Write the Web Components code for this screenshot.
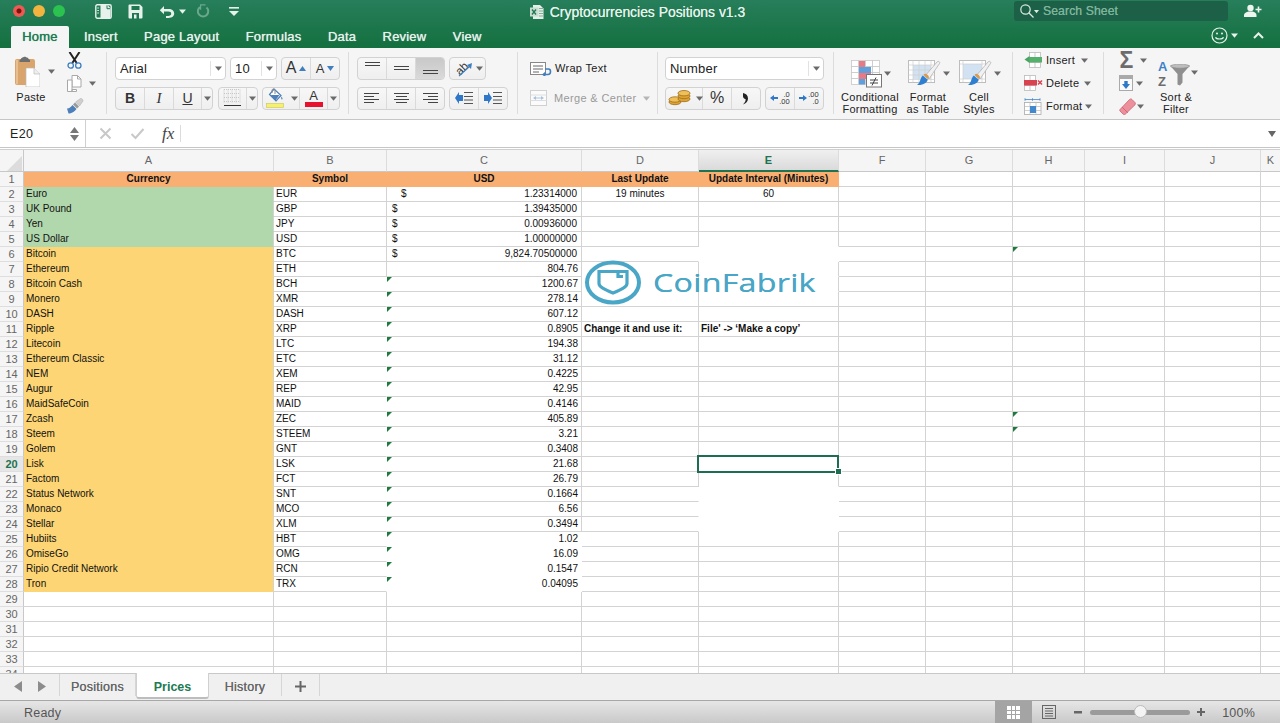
<!DOCTYPE html>
<html><head><meta charset="utf-8"><title>Cryptocurrencies Positions v1.3</title>
<style>
html,body{margin:0;padding:0;width:1280px;height:723px;overflow:hidden;background:#fff;font-family:"Liberation Sans",Arial,sans-serif}
body{display:flex;flex-direction:column}
</style></head><body>
<xl-titlebar></xl-titlebar>
<xl-ribbon></xl-ribbon>
<xl-formula></xl-formula>
<xl-sheet></xl-sheet>
<xl-sheettabs></xl-sheettabs>
<xl-status></xl-status>
<script>
const S=(w,h,b)=>`<svg xmlns="http://www.w3.org/2000/svg" width="${w}" height="${h}" viewBox="0 0 ${w} ${h}" style="display:block;flex:none">${b}</svg>`;
const I={
sidebar:S(17,15,'<rect x=".8" y=".8" width="15.4" height="13.4" rx="1.5" fill="none" stroke="#e8f2ed" stroke-width="1.4"/><path d="M5.5 1h7l3 3.2V14h-10z" fill="#e8f2ed"/><path d="M12 1.4v3.3h3.2" fill="none" stroke="#1f7750"/><path d="M2.3 4h1.6M2.3 6.5h1.6M2.3 9h1.6" stroke="#e8f2ed"/>'),
save:S(15,15,'<path d="M1.5.5h10.5l2.5 2.5v10.5a1 1 0 0 1-1 1h-12a1 1 0 0 1-1-1v-12a1 1 0 0 1 1-1z" fill="#e8f2ed"/><rect x="3.5" y="2" width="8" height="4" fill="#1f7750"/><rect x="4" y="9" width="7" height="6" fill="#1f7750"/><rect x="6" y="10.5" width="2.5" height="4" fill="#e8f2ed"/>'),
undo:S(16,13,'<path d="M5 1 .8 5.2 5 9.2V6.6h4.2c2 0 3 .9 3 2.1 0 1.4-1.1 2.2-3 2.2H7V13h2.5c3.6 0 5.7-1.9 5.7-4.4S13.200 4 9.500 4H5z" fill="#e8f2ed"/>'),
redo:S(13,14,'<path d="M9.500 3.400A5.200 5.200 0 1 1 3 3.100" fill="none" stroke="#6ba78c" stroke-width="2"/><path d="M3 .3v5.400h1.200V1.500H8.500V.3z" fill="#6ba78c"/>'),
custom:S(10,9,'<rect x="0" y="0" width="10" height="1.600" fill="#e8f2ed"/><path d="M0 4h10L5 9z" fill="#e8f2ed"/>'),
xls:S(14,14,'<path d="M3 0h7l3.500 3.500V14H3z" fill="#e6eee9"/><path d="M9 3.500h4M9 6h4M9 8.500h4M9 11h4" stroke="#7fae97"/><rect x="0" y="2.500" width="8.500" height="9" fill="#c8ddd1"/><path d="M2 4.500l4 5M6 4.500l-4 5" stroke="#1f7750" stroke-width="1.300"/>'),
search:S(16,16,'<circle cx="6.500" cy="6.500" r="4.700" fill="none" stroke="#dcebe3" stroke-width="1.200"/><path d="M10 10l4.500 4.500" stroke="#dcebe3" stroke-width="1.300"/>'),
person:S(18,14,'<circle cx="6.500" cy="4" r="3.200" fill="#eef5f1"/><path d="M0 13v-2c0-2 2.500-3 4.500-3.500h4c2 .5 4 1.500 4 3.500v2z" fill="#eef5f1"/><path d="M14.500 2.500v6M11.500 5.500h6" stroke="#eef5f1" stroke-width="1.600"/>'),
smile:S(17,17,'<circle cx="8.500" cy="8.500" r="7.500" fill="none" stroke="#e8f2ed" stroke-width="1.200"/><circle cx="6" cy="6.500" r="1" fill="#e8f2ed"/><circle cx="11" cy="6.500" r="1" fill="#e8f2ed"/><path d="M4.500 10.200c1 2.400 7 2.400 8 0" fill="none" stroke="#e8f2ed" stroke-width="1.200"/>'),
chev:S(11,7,'<path d="M1 6l4.500-4.500L10 6" fill="none" stroke="#e8f2ed" stroke-width="2"/>'),
paste:S(25,31,'<rect x="0" y="3" width="20" height="26" rx="2" fill="#d9a56c"/><rect x="1" y="4" width="2" height="24" fill="#e8c08f"/><path d="M6 3c0-1 1-1.500 2-1.500.3-1 3.200-1 3.500 0 1 0 2 .5 2 1.500l1.500 1v2H4.500V4z" fill="#6e6e6e"/><path d="M11 12h8l6 6v13H11z" fill="#fff" stroke="#bbb" stroke-width=".7"/><path d="M19 12v6h6" fill="#eee" stroke="#bbb" stroke-width=".7"/>'),
cut:S(15,17,'<path d="M2.500 0l7.200 11M12.500 0L5.300 11" stroke="#222" stroke-width="2"/><circle cx="3.700" cy="13.500" r="2.700" fill="none" stroke="#3c7fc0" stroke-width="1.300"/><circle cx="11.300" cy="13.500" r="2.700" fill="none" stroke="#3c7fc0" stroke-width="1.300"/>'),
copy:S(15,17,'<path d="M5 .5h5.500l3.500 3.500v8H5z" fill="#fff" stroke="#a8a8a8"/><path d="M10.500.5V4H14" fill="none" stroke="#a8a8a8"/><path d="M.5 5H5v11.500H.5zM5 14.500h4.500v2H5z" fill="#fff" stroke="#a8a8a8"/>'),
brush:S(17,16,'<path d="M0 10.500c3 0 4-2 5.500-3.500l4 4c-1.500 2-4 4.500-8 4.500z" fill="#4d7fb8"/><path d="M6 6.500l2-2 4 4-2 2z" fill="#9a9a9a"/><path d="M8.500 4L13.500.5c1-.5 3 1.500 2.500 2.500L12.500 8z" fill="#cfcfcf" stroke="#aaa" stroke-width=".5"/>'),
borders:S(20,18,'<path d="M1 .5h16M1 4.500h16M1 8.500h16M1 12.500h16M1 .5v13M5 .5v13M9 .5v13M13 .5v13M17 .5v13" stroke="#bcbcbc" stroke-width=".8" stroke-dasharray="1 1"/><path d="M1 16.500h17" stroke="#333" stroke-width="1.200"/>'),
fill:S(19,20,'<path d="M8 1l7 6.500-5 5.500-6.500-6.500z" fill="#fff" stroke="#4d7fb8" stroke-width="1.200"/><path d="M4.500 7h9l-4 5.500z" fill="#4d7fb8"/><path d="M6 5V2c0-1.300 3-1.300 3 0v4" fill="none" stroke="#888"/><path d="M15.500 8.500c1 1.500 1.500 2.500.6 3-.9.200-1.200-1.300-.6-3z" fill="#4d7fb8"/><rect x=".5" y="15.500" width="17" height="4" fill="#f6f06f" stroke="#d0cc60" stroke-width=".7"/>'),
wrap:S(23,16,'<rect x=".5" y="2.500" width="15" height="12" fill="#fff" stroke="#888"/><path d="M3 6h10M3 9h10M3 12h6" stroke="#666"/><path d="M15 9h3.500c1.500 0 2 1 2 2.500s-.7 3-2.500 3h-3" fill="none" stroke="#3f7fbf" stroke-width="1.600"/><path d="M15.500 11.500v6l-3.500-3z" fill="#3f7fbf"/>'),
merge:S(18,16,'<rect x=".5" y=".5" width="16" height="15" fill="#fbfbfb" stroke="#d0d0d0"/><path d="M.5 5h16M.5 10.500h16" stroke="#dedede"/><path d="M4 8h9" stroke="#a9c3dd"/><path d="M6 6v4L3 8zM11 6v4l3-2z" fill="#a9c3dd"/>'),
coins:S(24,17,'<ellipse cx="7" cy="12" rx="6" ry="2.700" fill="#dfa334" stroke="#9c6d1b" stroke-width=".8"/><ellipse cx="7" cy="9.500" rx="6" ry="2.700" fill="#efc058" stroke="#9c6d1b" stroke-width=".8"/><ellipse cx="16" cy="9" rx="6" ry="2.700" fill="#dfa334" stroke="#9c6d1b" stroke-width=".8"/><ellipse cx="16" cy="6" rx="6" ry="2.700" fill="#dfa334" stroke="#9c6d1b" stroke-width=".8"/><ellipse cx="16" cy="3.200" rx="6" ry="2.700" fill="#efc058" stroke="#9c6d1b" stroke-width=".8"/>'),
comma:S(8,13,'<path d="M1 1c3 .5 5 2.500 5 5.500S4 11.500 1 12.500C3 10.500 3.800 9 3.600 7 2 7 .8 5.500 1 4z" fill="#222"/>'),
cf:S(34,28,'<g fill="#fff" stroke="#c8c8c8" stroke-width=".8"><rect x=".5" y=".5" width="7" height="6"/><rect x="7.500" y=".5" width="7" height="6"/><rect x="14.500" y=".5" width="7" height="6"/><rect x="21.500" y=".5" width="7" height="6"/><rect x=".5" y="6.500" width="7" height="6"/><rect x="7.500" y="6.500" width="7" height="6"/><rect x="14.500" y="6.500" width="7" height="6"/><rect x="21.500" y="6.500" width="7" height="6"/><rect x=".5" y="12.500" width="7" height="6"/><rect x="7.500" y="12.500" width="7" height="6"/><rect x="14.500" y="12.500" width="7" height="6"/><rect x="21.500" y="12.500" width="7" height="6"/><rect x=".5" y="18.500" width="7" height="6"/><rect x="7.500" y="18.500" width="7" height="6"/></g><rect x="8" y="1" width="6" height="6" fill="#e67b86"/><rect x="8" y="7" width="12" height="6" fill="#5fa0dc"/><rect x="8" y="13" width="12" height="6" fill="#e67b86"/><rect x="8" y="19" width="6" height="5.500" fill="#5fa0dc"/><rect x="15.500" y="14.500" width="15" height="12.500" fill="#fff" stroke="#777"/><path d="M19 20h8M19 23h8M25 17.500l-4 8" stroke="#444"/>'),
table:S(33,28,'<rect x=".5" y=".5" width="26" height="22" fill="#fff" stroke="#bdbdbd"/><rect x="5" y="5" width="18" height="14" fill="#d3e2f2"/><path d="M.5 5h26M.5 10h26M.5 15h26M.5 19.500h26M5 .5v22M11 .5v22M17 .5v22M23 .5v22" stroke="#cfcfcf" stroke-width=".7"/><path d="M17 16L29 2c1.500-1.500 3.500 0 2.500 1.500L21 19z" fill="#f1f1f1" stroke="#a9a9a9" stroke-width=".7"/><path d="M15.500 15c1-1.500 2.500-1.500 4-.2s2 3 .8 4.200c-1.500-1-3.500-2.500-4.800-4z" fill="#d99b52"/><path d="M14.800 15.500c1.500 1.500 3.500 3 5 4-.5 3-4.500 6-10.800 5.500 3.500-2 3-7 5.800-9.500z" fill="#2f7fd0"/>'),
cstyle:S(33,28,'<rect x=".5" y=".5" width="26" height="22" fill="#fff" stroke="#bdbdbd"/><rect x="4" y="4" width="19" height="15" fill="#d3e2f2"/><path d="M.5 4h26M.5 19h26M4 .5v22M23 .5v22" stroke="#cfcfcf" stroke-width=".7"/><path d="M17 16L29 2c1.500-1.500 3.500 0 2.500 1.500L21 19z" fill="#f1f1f1" stroke="#a9a9a9" stroke-width=".7"/><path d="M15.500 15c1-1.500 2.500-1.500 4-.2s2 3 .8 4.200c-1.500-1-3.500-2.500-4.800-4z" fill="#d99b52"/><path d="M14.800 15.500c1.500 1.500 3.500 3 5 4-.5 3-4.500 6-10.800 5.500 3.500-2 3-7 5.800-9.500z" fill="#2f7fd0"/>'),
insert:S(18,16,'<g fill="#fff" stroke="#bbb" stroke-width=".8"><rect x="5.500" y=".5" width="11" height="15"/></g><path d="M5.500 5.500h11M5.500 10.500h11M11 .5v15" stroke="#bbb" stroke-width=".8"/><rect x="5" y="5" width="13" height="5.500" fill="#54b06a"/><path d="M5.500 4v7L.5 7.500z" fill="#4aa562"/>'),
del:S(19,16,'<g fill="#fff" stroke="#bbb" stroke-width=".8"><rect x=".5" y=".5" width="11" height="15"/></g><path d="M.5 5.500h11M.5 10.500h11M6 .5v15" stroke="#bbb" stroke-width=".8"/><rect x="0" y="5" width="13" height="5.500" fill="#d9434f"/><path d="M14 5.500l4 4M18 5.500l-4 4" stroke="#d9434f" stroke-width="1.500"/>'),
format:S(18,17,'<rect x=".5" y="4.500" width="16.500" height="12" fill="#fff" stroke="#aaa" stroke-width=".8"/><path d="M.5 8.500h16.500M.5 12.500h16.500M6 4.500v12M12 4.500v12" stroke="#bbb" stroke-width=".7"/><rect x="6" y="8" width="6" height="7" fill="#4288cc"/><path d="M1 1.500h15M1 .2v2.600M16 .2v2.600M8.500.2v2.600" stroke="#4288cc" stroke-width=".8"/>'),
fdown:S(14,16,'<rect x=".5" y=".5" width="13" height="15" fill="#fafafa" stroke="#aaa"/><rect x="1" y="1" width="12" height="3" fill="#a9a9a9"/><path d="M5.300 6h3.400v3H11l-4 5-4-5h2.300z" fill="#2f78c9"/>'),
eraser:S(17,17,'<path d="M1 11.500L10.500 1.500c1-.8 1.800-.8 2.500 0l3 3c.6.800.6 1.500 0 2.300L6.500 16c-.8.800-1.700.8-2.500 0l-3-3c-.4-.5-.4-1 0-1.500z" fill="#ee8f9c" stroke="#c4596a" stroke-width=".7"/><path d="M3 9l6 6" stroke="#c4596a" stroke-width=".7"/>'),
funnel:S(20,22,'<path d="M0 1.500h20L12.500 10v8.500L10 21.500l-2.500-1V10z" fill="#8f8f8f"/><ellipse cx="10" cy="2.200" rx="9.500" ry="2" fill="#bdbdbd" stroke="#8a8a8a" stroke-width=".6"/>'),
};
const ca=(c='#6a6a6a')=>`<svg width="7" height="5" viewBox="0 0 7 5" style="display:block;flex:none"><path d="M0 .5h7L3.500 4.800z" fill="${c}"/></svg>`;
const lines=(rows,w=17)=>{let h=rows.at(-1)[0]+2;return S(w,h,rows.map(r=>`<path d="M${r[1]} ${r[0]+.5}h${r[2]}" stroke="#444" stroke-width="1"/>`).join(''))};

function def(name,css,build){
  customElements.define(name,class extends HTMLElement{
    constructor(){super();const r=this.attachShadow({mode:'open'});r.innerHTML=`<style>${css}</style>`+(typeof build==='function'?build(this):build)}
  });
}
const base=`*,*::before,*::after{box-sizing:border-box}`;

def('xl-titlebar',base+`
:host{display:block;flex:none;height:48px;background:linear-gradient(#277e5b,#14703f);color:#e6f1eb;font:13px "Liberation Sans",sans-serif}
.r1{display:grid;grid-template-columns:1fr auto 1fr;height:26px}
.left,.right{display:flex;align-items:flex-start}
.tl{width:12px;height:12px;border-radius:50%;margin-top:5px}
.left{padding-left:13px}
.ic{margin-top:4px}
.title{display:flex;gap:6px;padding:5px 5px 0 0;height:22px;font-size:13.9px;text-shadow:0 0 .6px #e6f1eb;line-height:15px}
.search{margin-left:auto;margin-top:1px;width:214px;height:20px;background:#1c6147;border-radius:3px;display:flex;align-items:center;padding-left:5px;color:#7db49b;font-size:12.2px;letter-spacing:.1px;text-shadow:0 0 .4px #7db49b}
.r2{display:flex;height:22px;align-items:stretch;padding-left:11px;font-size:13px;text-shadow:0 0 .7px #e6f1eb;position:relative}
.tab{line-height:22px;margin-right:26.4px;letter-spacing:.2px;font-weight:normal}
.home{background:#f5f5f5;width:58px;text-align:center;color:#217a52;text-shadow:0 0 .7px #217a52;border-radius:2px 2px 0 0;margin-right:15px}
.rt{margin-left:auto;display:flex;align-items:center;margin-top:-3px;padding-right:16px}
`,`<div class="r1"><div class="left">
<i class="tl" style="background:radial-gradient(circle,#7a1210 0 2px,#ee5a53 3px);"></i><i class="tl" style="background:#f3b33f;margin-left:8px"></i><i class="tl" style="background:#2bc24f;margin-left:8px"></i>
<span class="ic" style="margin-left:30px">${I.sidebar}</span><span class="ic" style="margin-left:16px">${I.save}</span><span class="ic" style="margin-left:16px;margin-top:5px">${I.undo}</span><span style="margin:9px 0 0 4px">${ca('#e8f2ed')}</span><span class="ic" style="margin-left:11px">${I.redo}</span><span class="ic" style="margin-left:19px;margin-top:7px">${I.custom}</span>
</div><div class="title">${I.xls}<span>Cryptocurrencies Positions v1.3</span></div>
<div class="right"><div class="search">${I.search}<span style="margin:0 4px 0 -1px">${ca('#dcebe3').replace('width="7"','width="5"')}</span>Search Sheet</div><span style="margin:4px 18px 0 16px">${I.person}</span></div></div>
<div class="r2"><span class="tab home">Home</span><span class="tab">Insert</span><span class="tab">Page Layout</span><span class="tab">Formulas</span><span class="tab">Data</span><span class="tab">Review</span><span class="tab">View</span>
<span class="rt">${I.smile}<span style="margin:0 15px 0 3px">${ca('#e8f2ed')}</span>${I.chev}</span></div>`);

def('xl-sec',base+`
:host{display:flex;flex:none;height:62px;margin-top:4px;border-right:1px solid #dcdcdc}
:host([last]){border-right:0}
`,`<slot></slot>`);
def('xl-rows',base+`
:host{display:flex;flex-direction:column;gap:8px;padding-top:5px}
`,`<slot></slot>`);
def('xl-row',base+`:host{display:flex;height:22px;gap:4px;align-items:center}`,`<slot></slot>`);
def('xl-grp',base+`
:host{display:flex;height:23px;border:1px solid #d2d2d2;border-radius:4px;background:linear-gradient(#f7f7f7,#efefef);overflow:hidden;flex:none}
`,`<slot></slot>`);
def('xl-btn',base+`
:host{display:flex;align-items:center;justify-content:center;height:100%;border-right:1px solid #dadada;gap:3px;flex:none;font:15px "Liberation Sans",sans-serif;color:#333}
:host(:last-child){border-right:0}
:host([on]){background:linear-gradient(#c8c8c8,#dadada)}
`,`<slot></slot>`);
def('xl-box',base+`
:host{display:flex;align-items:center;height:23px;border:1px solid #d2d2d2;border-radius:4px;background:#fff;font:13px "Liberation Sans",sans-serif;color:#222;padding-left:4px;position:relative;letter-spacing:.2px;flex:none}
.c{position:absolute;right:0;top:3px;bottom:3px;width:15px;border-left:1px solid #e2e2e2;display:flex;align-items:center;justify-content:center}
`,h=>`<slot></slot><span class="c">${ca()}</span>`);
def('xl-big',base+`
:host{display:block;flex:none;font:11px/12px "Liberation Sans",sans-serif;color:#222;text-align:center;letter-spacing:.25px;white-space:pre-line}
.i{height:39px;display:flex;align-items:center;text-align:left}
`,h=>`<div class="i" style="padding-left:${h.getAttribute('pad')||0}px"><slot name="i"></slot></div><slot></slot>`);
def('xl-line',base+`
:host{display:flex;align-items:center;height:16px;font:11px "Liberation Sans",sans-serif;color:#222;letter-spacing:.25px;flex:none}
`,`<slot></slot>`);
def('xl-stack',base+`:host{display:flex;flex-direction:column;justify-content:space-between;height:62px;flex:none}`,`<slot></slot>`);

const ibtn=(w,inner,on)=>`<xl-btn style="width:${w}px"${on?' on':''}>${inner}</xl-btn>`;
def('xl-ribbon',base+`
:host{display:flex;flex:none;height:71px;background:#f5f5f5;border-bottom:1px solid #c6c6c6}
.t{font-size:7.5px;line-height:7.5px;text-align:right;color:#333;font-family:"Liberation Sans",sans-serif}
.up{display:block}
`,`
<xl-sec style="width:107px">
 <xl-big style="width:62px" pad="15"><span slot="i" style="display:flex;align-items:center">${I.paste}<span style="margin-left:8px;margin-top:-1px">${ca()}</span></span>Paste</xl-big>
 <xl-stack style="width:40px;padding-left:5px">
  <xl-line>${I.cut}</xl-line><xl-line style="gap:7px">${I.copy}${ca()}</xl-line><xl-line>${I.brush}</xl-line>
 </xl-stack>
</xl-sec>
<xl-sec style="width:242px;padding-left:8px"><xl-rows>
 <xl-row><xl-box style="width:111px">Arial</xl-box><xl-box style="width:47px">10</xl-box>
  <xl-grp style="width:59px">${ibtn(29,`<span style="font-size:16px">A</span><svg width="7" height="5"><path d="M0 5L3.500 0 7 5z" fill="#3f7fbf"/></svg>`)}${ibtn(28,`<span style="font-size:13px">A</span><svg width="7" height="5"><path d="M0 0L3.500 5 7 0z" fill="#3f7fbf"/></svg>`)}</xl-grp></xl-row>
 <xl-row style="gap:5px"><xl-grp style="width:98px">${ibtn(29,'<b style="font-size:14px">B</b>')}${ibtn(29,'<i style="font:italic 15px \'Liberation Serif\',serif">I</i>')}${ibtn(28,'<span style="text-decoration:underline;font-size:14px">U</span>')}<xl-btn style="width:10px">${ca()}</xl-btn></xl-grp>
 <xl-grp style="width:40px">${ibtn(28,I.borders)}<xl-btn style="width:10px">${ca()}</xl-btn></xl-grp>
 <xl-grp style="width:78px;margin-left:-1px"><xl-btn style="width:37px;border-right:1px solid #dadada;gap:6px;justify-content:flex-start;padding-left:3px">${I.fill}${ca()}</xl-btn><xl-btn style="width:28px;padding-top:1px;flex-direction:column;gap:0"><span style="font-size:13px;line-height:12px">A</span><svg width="18" height="5"><rect width="18" height="5" fill="#e8112d"/></svg></xl-btn><xl-btn style="width:11px">${ca()}</xl-btn></xl-grp></xl-row>
</xl-rows></xl-sec>
<xl-sec style="width:169px;padding-left:8px"><xl-rows>
 <xl-row><xl-grp style="width:88px">${ibtn(29,`<span style="margin-top:-8px">${lines([[0,1,15],[3,1,15]])}</span>`)}${ibtn(29,lines([[0,1,15],[3,1,15]]))}${ibtn(28,`<span style="margin-top:8px">${lines([[0,1,15],[3,1,15]])}</span>`,1)}</xl-grp>
  <xl-grp style="width:37px">${ibtn(35,`<span style="display:flex;gap:3px;align-items:center">${S(20,20,'<text x="2" y="14" font-size="11.500" font-family="Liberation Sans" fill="#333" transform="rotate(-45 9 10)">ab</text><path d="M6 18L17 8" stroke="#3f7fbf" stroke-width="1.200"/><path d="M19 5l-1 6-4-4z" fill="#3f7fbf"/>')}${ca()}</span>`)}</xl-grp></xl-row>
 <xl-row><xl-grp style="width:88px">${ibtn(29,lines([[0,0,15],[3,0,10],[6,0,15],[9,0,10]]))}${ibtn(29,lines([[0,1,15],[3,3,11],[6,1,15],[9,3,11]]))}${ibtn(28,lines([[0,1,15],[3,6,10],[6,1,15],[9,6,10]]))}</xl-grp>
  <xl-grp style="width:59px">${ibtn(29,S(18,12,'<path d="M8 3H4V0L0 6l4 6V9h4z" fill="#2f78c9"/><path d="M9 .5h9M9 4.500h9M9 8h9M9 11.500h9" stroke="#555"/>'))}${ibtn(28,S(18,12,'<path d="M0 3h4V0l4 6-4 6V9H0z" fill="#2f78c9"/><path d="M9 .5h9M9 4.500h9M9 8h9M9 11.500h9" stroke="#555"/>'))}</xl-grp></xl-row>
</xl-rows></xl-sec>
<xl-sec style="width:140px;padding-left:12px"><xl-rows>
 <xl-row style="font:11px 'Liberation Sans',sans-serif;color:#222;letter-spacing:.3px;gap:2px">${I.wrap}<span>Wrap Text</span></xl-row>
 <xl-row style="font:11px 'Liberation Sans',sans-serif;color:#9a9a9a;letter-spacing:.35px;gap:6px">${I.merge}<span>Merge &amp; Center</span>${ca('#b5b5b5')}</xl-row>
</xl-rows></xl-sec>
<xl-sec style="width:176px;padding-left:7px"><xl-rows>
 <xl-row><xl-box style="width:159px">Number</xl-box></xl-row>
 <xl-row><xl-grp style="width:96px"><xl-btn style="width:37px;gap:4px;padding-left:2px">${I.coins}${ca()}</xl-btn>${ibtn(29,'<span style="font-size:16px">%</span>')}${ibtn(28,I.comma)}</xl-grp>
 <xl-grp style="width:59px">${ibtn(29,`<span style="display:flex;align-items:center;gap:1px">${S(8,8,'<path d="M4 1v2h4v2H4v2L0 4z" fill="#2f78c9"/>')}<span class="t">.0<br>.00</span></span>`)}${ibtn(28,`<span style="display:flex;align-items:center;gap:1px">${S(8,8,'<path d="M0 3h4V1l4 3-4 3V5H0z" fill="#2f78c9"/>')}<span class="t">.00<br>.0</span></span>`)}</xl-grp></xl-row>
</xl-rows></xl-sec>
<xl-sec style="width:179px">
 <xl-big style="width:72px" pad="17"><span slot="i" style="display:flex;align-items:center;margin-top:4px">${I.cf}<span style="margin-left:-1px">${ca()}</span></span>Conditional
Formatting</xl-big>
 <xl-big style="width:44px" pad="2"><span slot="i" style="display:flex;align-items:center;gap:2px;margin-top:4px">${I.table}${ca()}</span>Format
as Table</xl-big>
 <xl-big style="width:58px" pad="9"><span slot="i" style="display:flex;align-items:center;gap:2px;margin-top:4px">${I.cstyle}${ca()}</span>Cell
Styles</xl-big>
</xl-sec>
<xl-sec style="width:91px;padding-left:11px"><xl-stack>
 <xl-line style="gap:4px">${I.insert}<span style="margin-right:2px">Insert</span>${ca()}</xl-line>
 <xl-line style="gap:3px">${I.del}<span style="margin-right:2px">Delete</span>${ca()}</xl-line>
 <xl-line style="gap:4px">${I.format}<span style="margin-right:-1px">Format</span>${ca()}</xl-line>
</xl-stack></xl-sec>
<xl-sec last style="flex:1">
 <xl-stack style="width:47px;padding-left:15px">
  <xl-line style="gap:6px"><span style="font:bold 23px/16px 'Liberation Sans',sans-serif;color:#6c6c6c;width:15px;text-align:center">Σ</span>${ca()}</xl-line>
  <xl-line style="gap:3px">${I.fdown}${ca()}</xl-line>
  <xl-line style="gap:1px">${I.eraser}${ca()}</xl-line>
 </xl-stack>
 <xl-big style="width:50px" pad="7"><span slot="i" style="display:flex;align-items:flex-end;gap:1px;margin-top:3px"><span style="display:flex;flex-direction:column;font:bold 13px/15px 'Liberation Sans',sans-serif;margin-bottom:-2px"><span style="color:#3f82c8">A</span><span style="color:#6c6c6c">Z</span></span><span style="margin-left:1px;margin-bottom:1px">${I.funnel}</span><span style="margin-bottom:12px">${ca()}</span></span>Sort &amp;
Filter</xl-big>
</xl-sec>`);

def('xl-formula',base+`
:host{display:flex;flex:none;height:27px;background:#fff;border-bottom:1px solid #c6c6c6;font:12.5px "Liberation Sans",sans-serif;color:#222;align-items:stretch;position:relative}
.n{width:86px;border-right:1px solid #d0d0d0;display:flex;align-items:center;padding-left:10px;justify-content:space-between;padding-right:3px}
.s{display:flex;flex-direction:column;gap:2px}
.b{width:94px;display:flex;align-items:center;padding-left:13px;gap:14px;border-right:0}
.fx{font:italic 17px "Liberation Serif",serif;color:#444;margin-left:1px}
.sep{width:1px;background:#dcdcdc;margin:5px 0}
.e{flex:1;display:flex;align-items:center;justify-content:flex-end;padding-right:4px}
`,`<div class="n"><span style="letter-spacing:.3px">E20</span><span class="s" style="margin-right:3px"><svg width="9" height="6"><path d="M0 6L4.500 0 9 6z" fill="#777"/></svg><svg width="9" height="6"><path d="M0 0L4.500 6 9 0z" fill="#777"/></svg></span></div>
<div class="b">${S(13,13,'<path d="M1.500 1.500l10 10M11.500 1.500l-10 10" stroke="#c8c8c8" stroke-width="2"/>')}<span style="margin-left:4px">${S(15,13,'<path d="M1.500 7l4 4 8-9" fill="none" stroke="#c8c8c8" stroke-width="2"/>')}</span><span class="fx" style="margin-left:3px">fx</span></div><div class="sep"></div>
<div class="e"><svg width="8" height="6"><path d="M0 0h8L4 6z" fill="#666"/></svg></div>`);

const data=[
['Euro','EUR','1.23314000'],['UK Pound','GBP','1.39435000'],['Yen','JPY','0.00936000'],['US Dollar','USD','1.00000000'],['Bitcoin','BTC','9,824.70500000'],
['Ethereum','ETH','804.76'],['Bitcoin Cash','BCH','1200.67'],['Monero','XMR','278.14'],['DASH','DASH','607.12'],['Ripple','XRP','0.8905'],['Litecoin','LTC','194.38'],['Ethereum Classic','ETC','31.12'],['NEM','XEM','0.4225'],['Augur','REP','42.95'],['MaidSafeCoin','MAID','0.4146'],['Zcash','ZEC','405.89'],['Steem','STEEM','3.21'],['Golem','GNT','0.3408'],['Lisk','LSK','21.68'],['Factom','FCT','26.79'],['Status Network','SNT','0.1664'],['Monaco','MCO','6.56'],['Stellar','XLM','0.3494'],['Hubiits','HBT','1.02'],['OmiseGo','OMG','16.09'],['Ripio Credit Network','RCN','0.1547'],['Tron','TRX','0.04095']];
def('xl-logo',base+`
:host{position:absolute;left:585px;top:110px;width:235px;height:45px;display:block}
svg{position:absolute;left:0;top:0}
span{position:absolute;left:68px;top:6px;font:25px/32px "Open Sans",sans-serif;color:#4aa6c6;transform:scaleX(1.29);transform-origin:0 50%;white-space:nowrap;letter-spacing:.2px;text-shadow:0 0 .5px #4aa6c6}
`,`<svg width="58" height="45" viewBox="0 0 58 45"><ellipse cx="28" cy="22.500" rx="26" ry="20" fill="none" stroke="#4aa6c6" stroke-width="4"/><path d="M14 11.500h28v12c0 4-8 7-14 9.500-6-2.500-14-5.500-14-9.500z" fill="none" stroke="#4aa6c6" stroke-width="3.200"/><path d="M33 11.500v5h5" fill="none" stroke="#4aa6c6" stroke-width="3.200"/></svg><span>CoinFabrik</span>`);
def('xl-sheet',base+`
:host{display:block;flex:1;min-height:0;position:relative;overflow:hidden;background:#fff;margin-top:1px;border-top:1px solid #cfcfcf;font:10px "Liberation Sans",sans-serif;color:#111}
.g{display:grid;grid-template-columns:24px 250px 113px 195px 117px 140px 87px 87px 72px 80px 96px 20px;grid-template-rows:22px;grid-auto-rows:15px}
.g>div{border-right:1px solid #d3d3d3;border-bottom:1px solid #d3d3d3;white-space:nowrap;padding:0 2px;line-height:14px;position:relative;min-width:0}
.g>.h{background:#f5f5f5;text-align:center;color:#666;line-height:21px;font-size:11px;padding:0;border-color:#dcdcdc;border-bottom-color:#c8c8c8}
.g>.h.sel{background:linear-gradient(#f0f0f0,#dadada);color:#1f7350;font-weight:bold;border-bottom:2px solid #1f7350;line-height:21px}
.g>.rh{background:#f5f5f5;color:#666;text-align:center;font-size:11px;padding:0;border-right-color:#c8c8c8;border-bottom-color:#dedede}
.g>.rh.sel{color:#1f7350;font-weight:bold;background:#e6e6e6}
.ctr{text-align:center}.bold{font-weight:bold}
.g>.hd{background:#f9ae72;border-color:#f9ae72;font-weight:bold;text-align:center;color:#111}
.g>.gr{background:#b1d7ac;border-color:#b1d7ac;border-right-color:#d3d3d3}
.g>.or{background:#fdd574;border-color:#fdd574;border-right-color:#d3d3d3}
.g>.nob{border-bottom-color:#fff}.g>.nor{border-right-color:#fff}
.g>.m{display:flex;justify-content:space-between;padding-right:4px}
.g>.r{text-align:right;padding-right:3px}
.tri::before{content:"";position:absolute;left:0;top:0;border-top:5px solid #1b7a3c;border-right:5px solid transparent}
.g>.cur::after{content:"";position:absolute;left:-2px;top:-2px;width:142px;height:18px;border:2px solid #1f6d50;z-index:2}
.hnd{position:absolute;left:836px;top:319px;width:5px;height:5px;background:#1f6d50;z-index:3;outline:1px solid #fff}
.corner{position:absolute;left:7px;top:6px}
`,()=>{
 const cols='ABCDEFGHIJK';let h='<div class="g"><div class="h" style="border-right-color:#c8c8c8"><svg class="corner" width="15" height="15"><path d="M15 0v15H0z" fill="#dcdcdc"/></svg></div>';
 for(const c of cols)h+=`<div class="h${c==='E'?' sel':''}">${c}</div>`;
 for(let r=1;r<=34;r++){
  h+=`<div class="rh${r===20?' sel':''}">${r}</div>`;
  const d=data[r-2];
  for(let ci=0;ci<11;ci++){
   const c=cols[ci];let cl=[],t='',st='';
   if(r===1&&ci<5){cl.push('hd');t=['Currency','Symbol','USD','Last Update','Update Interval (Minutes)'][ci]}
   if(d&&c==='A'){cl.push(r<=5?'gr':'or');t=d[0]}
   if(d&&c==='B')t=d[1];
   if(d&&c==='C'){
     if(r<=6){cl.push('m');st=`padding-left:${r===2?14:5}px`;t=`<span>$</span><span>${d[2]}</span>`}
     else{cl.push('r');t=d[2]}
     if(r>=8)cl.push('tri');
     if(r>=25)cl.push('nob','nor');
   }
   if(r>=8&&r<=28&&c==='B')cl.push('nor');
   if(r===2&&c==='D'){cl.push('ctr');t='19 minutes'}
   if(r===2&&c==='E'){cl.push('ctr');t='60'}
   if(r===11&&c==='D'){cl.push('bold');t='Change it and use it:'}
   if(r===11&&c==='E'){cl.push('bold');t="File' -> ‘Make a copy’"}
   if(c==='D'&&(r===7||r===8))cl.push('nob');
   if(c==='E'&&r>=5&&r<=8)cl.push('nob');
   if((c==='D'||c==='E')&&r===6)cl.push('nor');
   if(c==='E'&&r>=21&&r<=24)cl.push('nob');
   if((c==='D'||c==='E')&&r>=22&&r<=24)cl.push('nor');
   if(c==='H'&&(r===6||r===17||r===18))cl.push('tri');
   if(c==='E'&&r===20)cl.push('cur');
   if(c==='K')st+=';border-right:0';
   h+=`<div class="${cl.join(' ')}" style="${st}">${t}</div>`;
  }
 }
 return h+'</div><div class="hnd"></div><xl-logo></xl-logo>';
});

def('xl-sheettabs',base+`
:host{display:flex;flex:none;height:26px;background:#f0f0f0;border-top:1px solid #c8c8c8;font:12.5px "Liberation Sans",sans-serif;color:#666;letter-spacing:.25px;align-items:stretch}
.nav{width:60px;display:flex;align-items:center;padding:3px 0 0 14px;gap:14px;border-right:1px solid #d6d6d6;margin:0 0 4px}
.t{display:flex;align-items:center;justify-content:center;border-right:1px solid #d6d6d6;margin:0 0 4px;padding-top:3px;text-shadow:0 0 .4px #666}
.a{background:#fff;margin:-1px 0 1px;padding-top:4px;color:#217a52;font-weight:bold;border:1px solid #d0d0d0;border-top:0;border-bottom:2px solid #bdbdbd;border-radius:0 0 3px 3px;text-shadow:none;letter-spacing:0}
`,`<div class="nav"><svg width="9" height="11"><path d="M8 0v11L0 5.500z" fill="#8c8c8c"/></svg><svg width="9" height="11"><path d="M1 0v11l8-5.500z" fill="#8c8c8c"/></svg></div>
<div class="t" style="width:76px">Positions</div><div class="t a" style="width:73px">Prices</div><div class="t" style="width:73px">History</div>
<div class="t" style="width:38px"><svg width="11" height="11"><path d="M5.500 0v11M0 5.500h11" stroke="#666" stroke-width="2"/></svg></div>`);

def('xl-status',base+`
:host{display:flex;flex:none;height:22px;background:linear-gradient(#e6e6e6,#c9c9c9);border-top:1px solid #a8a8a8;font:12.5px "Liberation Sans",sans-serif;color:#555;align-items:center;padding-left:24px;letter-spacing:.2px}
.act{margin-left:auto;width:37px;height:100%;background:#a4a4a4;display:flex;align-items:center;justify-content:center}
.sl{position:relative;width:100px;height:5px;border-radius:3px;background:#9b9b9b;margin:0 7px 0 8px}
.k{position:absolute;left:44px;top:-4.500px;width:13px;height:13px;border-radius:50%;background:#f4f4f4;border:1px solid #bbb}
.tx{padding-top:1px}
`,`<span class="tx">Ready</span><div class="act">${S(13,13,'<path fill="#fff" d="M0 0h13v13H0z"/><path d="M4.500 0v13M8.500 0v13M0 4.500h13M0 8.500h13" stroke="#a4a4a4"/>')}</div>
<span style="margin-left:10px">${S(14,14,'<rect x=".5" y=".5" width="13" height="13" fill="none" stroke="#666"/><path d="M3 3.500h8M3 6h8M3 8.500h8M3 11h8" stroke="#666"/>')}</span>
<span style="margin-left:18px">${S(8,3,'<rect width="8" height="2.500" fill="#666"/>')}</span><div class="sl"><div class="k"></div></div>${S(8,8,'<path d="M4 0v8M0 4h8" stroke="#666" stroke-width="2"/>')}
<span class="tx" style="margin-left:17px;padding-right:25px">100%</span>`);
</script></body></html>
